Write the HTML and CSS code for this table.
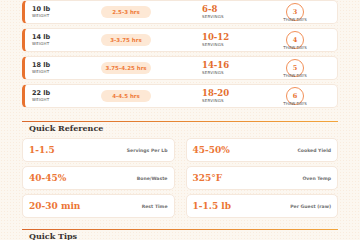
FILE: index.html
```html
<!DOCTYPE html>
<html>
<head>
<meta charset="utf-8">
<link rel="stylesheet" href="styles.css">
</head>
<body>
<div class="page">
  <div class="rows">
    <div class="row">
      <div class="cell"><div class="wval">10 lb</div><div class="cap">WEIGHT</div></div>
      <div class="cell"><span class="pill">2.5-3 hrs</span></div>
      <div class="cell"><div class="sval">6-8</div><div class="cap">SERVINGS</div></div>
      <div class="cell thaw"><div class="circle">3</div><div class="cap thawcap">THAW DAYS</div></div>
    </div>
    <div class="row">
      <div class="cell"><div class="wval">14 lb</div><div class="cap">WEIGHT</div></div>
      <div class="cell"><span class="pill">3-3.75 hrs</span></div>
      <div class="cell"><div class="sval">10-12</div><div class="cap">SERVINGS</div></div>
      <div class="cell thaw"><div class="circle">4</div><div class="cap thawcap">THAW DAYS</div></div>
    </div>
    <div class="row">
      <div class="cell"><div class="wval">18 lb</div><div class="cap">WEIGHT</div></div>
      <div class="cell"><span class="pill">3.75-4.25 hrs</span></div>
      <div class="cell"><div class="sval">14-16</div><div class="cap">SERVINGS</div></div>
      <div class="cell thaw"><div class="circle">5</div><div class="cap thawcap">THAW DAYS</div></div>
    </div>
    <div class="row">
      <div class="cell"><div class="wval">22 lb</div><div class="cap">WEIGHT</div></div>
      <div class="cell"><span class="pill">4-4.5 hrs</span></div>
      <div class="cell"><div class="sval">18-20</div><div class="cap">SERVINGS</div></div>
      <div class="cell thaw"><div class="circle">6</div><div class="cap thawcap">THAW DAYS</div></div>
    </div>
  </div>

  <section class="section">
    <h2 class="title">Quick Reference</h2>
    <div class="refgrid">
      <div class="ref"><span class="rval">1-1.5</span><span class="rlab">Servings Per Lb</span></div>
      <div class="ref"><span class="rval">45-50%</span><span class="rlab">Cooked Yield</span></div>
      <div class="ref"><span class="rval">40-45%</span><span class="rlab">Bone/Waste</span></div>
      <div class="ref"><span class="rval">325°F</span><span class="rlab">Oven Temp</span></div>
      <div class="ref"><span class="rval">20-30 min</span><span class="rlab">Rest Time</span></div>
      <div class="ref"><span class="rval">1-1.5 lb</span><span class="rlab">Per Guest (raw)</span></div>
    </div>
  </section>

  <section class="section section-last">
    <h2 class="title">Quick Tips</h2>
  </section>
</div>
</body>
</html>
```

FILE: styles.css
```css
html, body {
  margin: 0;
  padding: 0;
}
body {
  background-color: #fcf7f0;
  background-image: radial-gradient(circle, rgba(240, 180, 130, 0.16) 0.6px, transparent 0.9px);
  background-size: 3px 3px;
  font-family: "DejaVu Sans", sans-serif;
  color: #333;
  overflow: hidden;
}
.page {
  padding: 0 22px;
}
.rows {
  display: flex;
  flex-direction: column;
  gap: 4px;
}
.row {
  box-sizing: border-box;
  height: 24px;
  display: grid;
  grid-template-columns: 69px 101px 73px 40px;
  align-items: center;
  padding-left: 7px;
  background: #fff;
  border: 1px solid #f5e8dc;
  border-left: 3px solid #e8722f;
  border-radius: 5px;
}
.cell {
  display: flex;
  flex-direction: column;
  justify-content: center;
}
.wval {
  font-weight: 700;
  font-size: 6.5px;
  line-height: 8px;
  color: #333;
}
.cap {
  font-size: 4px;
  line-height: 6px;
  letter-spacing: 0.2px;
  color: #555;
}
.pill {
  display: block;
  width: 50px;
  height: 12px;
  line-height: 12px;
  border-radius: 6px;
  background: #fde8d5;
  color: #ef7b3b;
  font-weight: 700;
  font-size: 5.5px;
  text-align: center;
}
.sval {
  font-family: "DejaVu Serif", serif;
  font-weight: 700;
  font-size: 8.5px;
  line-height: 10px;
  color: #e46d2e;
}
.thaw {
  align-items: center;
}
.circle {
  box-sizing: border-box;
  width: 18px;
  height: 18px;
  border: 1px solid #f29058;
  border-radius: 50%;
  display: flex;
  align-items: center;
  justify-content: center;
  font-family: "DejaVu Serif", serif;
  font-weight: 700;
  font-size: 6.5px;
  color: #e8722f;
}
.thawcap {
  margin-top: -4px;
  line-height: 5px;
  letter-spacing: 0;
}
.section {
  margin-top: 13px;
  border-top: 1px solid #e8792f;
  border-image: linear-gradient(90deg, #da682c, #f2a53c) 1;
  padding-top: 1px;
}
.section-last {
  margin-top: 11px;
}
.title {
  margin: 0 0 0 7px;
  font-family: "DejaVu Serif", serif;
  font-weight: 700;
  font-size: 8px;
  line-height: 10px;
  color: #3a3330;
}
.refgrid {
  margin-top: 5px;
  display: grid;
  grid-template-columns: 1fr 1fr;
  gap: 4px 11px;
}
.ref {
  box-sizing: border-box;
  height: 24px;
  display: flex;
  align-items: center;
  justify-content: space-between;
  padding: 0 6px;
  background: #fff;
  border: 1px solid #f5e8dc;
  border-radius: 5px;
}
.rval {
  font-family: "DejaVu Serif", serif;
  font-weight: 700;
  font-size: 9px;
  line-height: 11px;
  color: #ec7636;
}
.rlab {
  font-weight: 700;
  font-size: 4.6px;
  line-height: 6px;
  margin-top: 2px;
  color: #707070;
}
```
